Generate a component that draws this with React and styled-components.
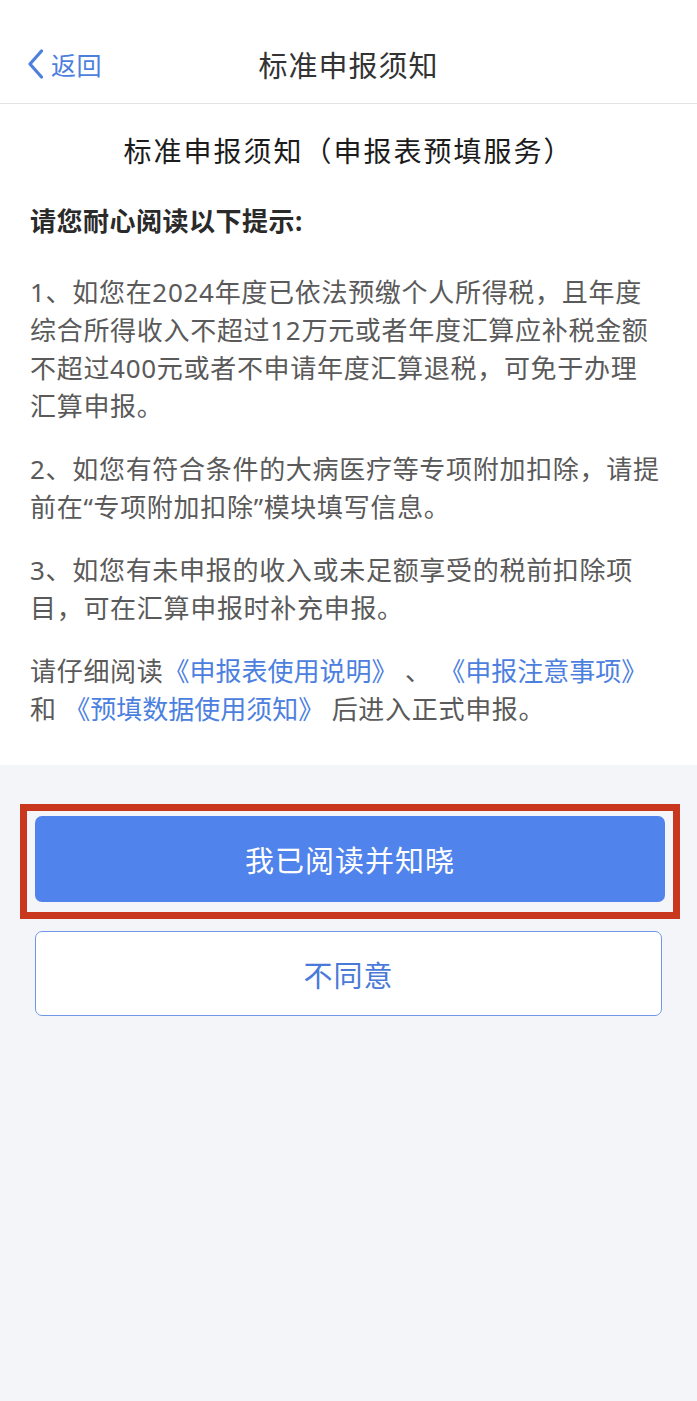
import React from 'react'
import styled, { createGlobalStyle } from 'styled-components'

const GlobalStyle = createGlobalStyle`
  html, body {
    margin: 0;
    padding: 0;
    background: #f4f5f9;
  }
  body {
    font-family: "Noto Sans", "Noto Sans CJK SC", sans-serif;
    -webkit-font-smoothing: antialiased;
  }
  * { box-sizing: border-box; }
`

const paragraphs = [
  [
    '1、如您在2024年度已依法预缴个人所得税，且年度',
    '综合所得收入不超过12万元或者年度汇算应补税金额',
    '不超过400元或者不申请年度汇算退税，可免于办理',
    '汇算申报。',
  ],
  [
    '2、如您有符合条件的大病医疗等专项附加扣除，请提',
    '前在“专项附加扣除”模块填写信息。',
  ],
  [
    '3、如您有未申报的收入或未足额享受的税前扣除项',
    '目，可在汇算申报时补充申报。',
  ],
]

export default function App() {
  return (
    <Page>
      <GlobalStyle />
      <Header>
        <NavRow>
          <BackButton>
            <svg width="17" height="30" viewBox="0 0 17 30" fill="none">
              <path d="M14.5 2 L3 15 L14.5 28" stroke="#4d7fde" strokeWidth="3.2" strokeLinecap="round" strokeLinejoin="round" />
            </svg>
            <span>返回</span>
          </BackButton>
          <NavTitle>标准申报须知</NavTitle>
          <span />
        </NavRow>
      </Header>

      <Notice>
        <Heading>标准申报须知（申报表预填服务）</Heading>
        <Lead>请您耐心阅读以下提示:</Lead>
        {paragraphs.map((lines, i) => (
          <Paragraph key={i}>
            {lines.map((line, j) => (
              <Line key={j}>{line}</Line>
            ))}
          </Paragraph>
        ))}
        <Paragraph>
          <Line>
            请仔细阅读<DocLink>《申报表使用说明》</DocLink> 、 <DocLink>《申报注意事项》</DocLink>
          </Line>
          <Line>
            和 <DocLink>《预填数据使用须知》</DocLink> 后进入正式申报。
          </Line>
        </Paragraph>
      </Notice>

      <Actions>
        <Highlight>
          <Button $primary>我已阅读并知晓</Button>
        </Highlight>
        <ButtonRow>
          <Button>不同意</Button>
        </ButtonRow>
      </Actions>
    </Page>
  )
}

const Page = styled.div`
  min-height: 100vh;
  background: #f4f5f9;
  display: flex;
  flex-direction: column;
`

const Header = styled.header`
  background: #fff;
  padding: 40px 0 15px;
  border-bottom: 1px solid #e3e3e6;
`

const NavRow = styled.div`
  height: 48px;
  display: grid;
  grid-template-columns: 1fr auto 1fr;
  align-items: center;
`

const BackButton = styled.div`
  display: flex;
  align-items: center;
  gap: 7px;
  padding-left: 27px;
  color: #4d7fde;
  font-size: 25px;
  letter-spacing: 0.5px;

  & svg {
    display: block;
  }
`

const NavTitle = styled.div`
  font-size: 29px;
  letter-spacing: 1px;
  color: #333;
`

const Notice = styled.section`
  background: #fff;
  padding: 27px 30px 37px;
`

const Heading = styled.h1`
  margin: 0;
  text-align: center;
  font-size: 28px;
  line-height: 40px;
  font-weight: 400;
  letter-spacing: 2px;
  color: #1c1c1c;
`

const Lead = styled.p`
  margin: 31px 0 33px;
  font-size: 26px;
  line-height: 38px;
  font-weight: 700;
  letter-spacing: 0.5px;
  color: #2a2a2a;
`

const Paragraph = styled.p`
  margin: 0 0 25px;
  font-size: 26px;
  line-height: 38px;
  letter-spacing: 0.7px;
  color: #5a5a5a;

  &:last-child {
    margin-bottom: 0;
  }
`

const Line = styled.span`
  display: block;
  white-space: nowrap;
`

const DocLink = styled.a`
  color: #4c80df;
  text-decoration: none;
  letter-spacing: 0;
`

const Actions = styled.div`
  padding: 39px 17px 0 20px;
  display: flex;
  flex-direction: column;
`

const Highlight = styled.div`
  border: 7px solid #c9371f;
  padding: 5px 8px 10px 8px;
`

const ButtonRow = styled.div`
  margin-top: 12px;
  padding: 0 18px 0 15px;
`

const Button = styled.button`
  width: 100%;
  height: ${p => (p.$primary ? '86px' : '85px')};
  border-radius: 7px;
  border: ${p => (p.$primary ? 'none' : '1.5px solid #7098e6')};
  background: ${p => (p.$primary ? '#5083eb' : '#fff')};
  color: ${p => (p.$primary ? '#fff' : '#4a7ad8')};
  font-family: inherit;
  font-size: 29px;
  letter-spacing: 1px;
  display: flex;
  align-items: center;
  justify-content: center;
  padding: 0;
`
